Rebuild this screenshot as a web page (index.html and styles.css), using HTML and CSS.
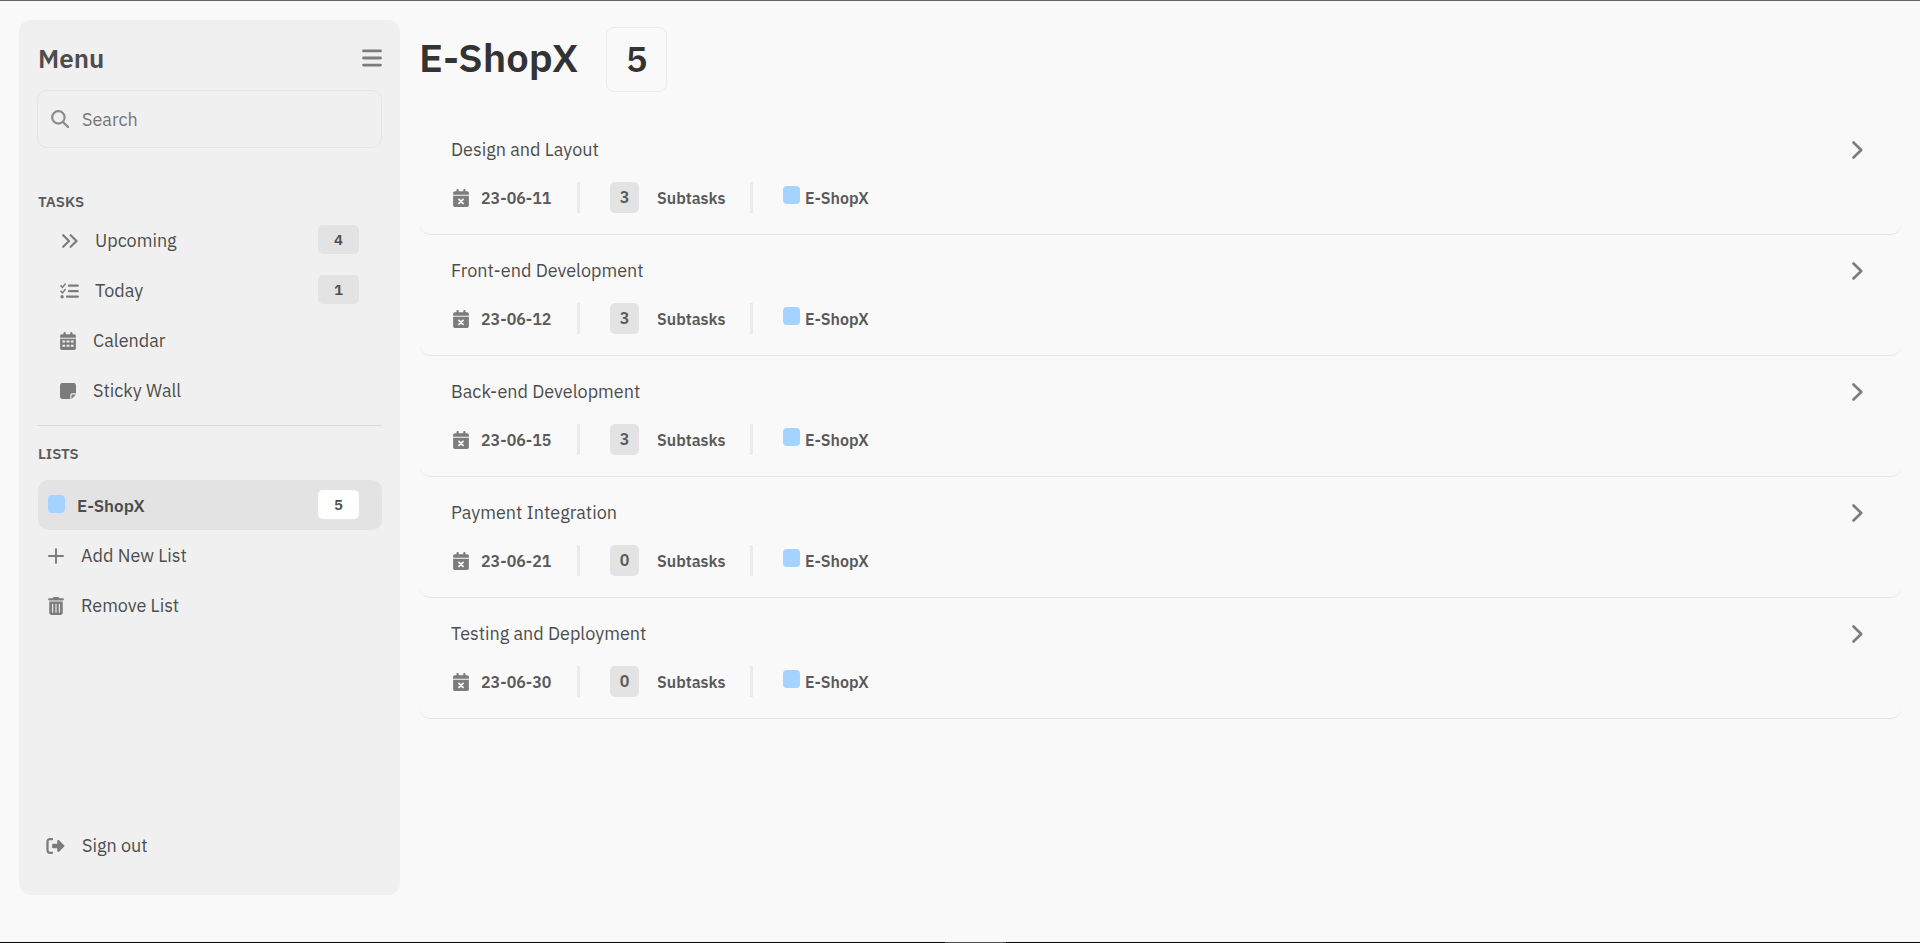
FILE: index.html
```html
<!DOCTYPE html>
<html lang="en">
<head>
<meta charset="utf-8">
<title>E-ShopX</title>
<link rel="stylesheet" href="styles.css">
</head>
<body>
<svg class="sprite" aria-hidden="true">
  <symbol id="i-bars" viewBox="0 0 20 18"><path d="M1.5 1.9h17M1.5 9h17M1.5 16.1h17" fill="none" stroke="currentColor" stroke-width="2.8" stroke-linecap="round"/></symbol>
  <symbol id="i-search" viewBox="0 0 18 18"><circle cx="7.4" cy="7.4" r="6.2" fill="none" stroke="currentColor" stroke-width="2.2"/><path d="M12 12l5 5" stroke="currentColor" stroke-width="2.4" stroke-linecap="round"/></symbol>
  <symbol id="i-angles" viewBox="0 0 16 14"><path d="M1.2 1.2L7 7l-5.800 5.800M8.700 1.200L14.500 7l-5.800 5.800" fill="none" stroke="currentColor" stroke-width="2.2" stroke-linecap="round" stroke-linejoin="round"/></symbol>
  <symbol id="i-check" viewBox="0 0 19 16"><path d="M1 2.900l1.500 1.500L5.200 1M1 8.400l1.500 1.500L5.200 6.500" fill="none" stroke="currentColor" stroke-width="1.500" stroke-linecap="round" stroke-linejoin="round"/><circle cx="2.100" cy="13.700" r="1.700" fill="currentColor"/><path d="M9 2.700h8.800M9 8.200h8.800M7 13.700h10.800" stroke="currentColor" stroke-width="2.200" stroke-linecap="round"/></symbol>
  <symbol id="i-calendar" viewBox="0 0 448 512"><path fill="currentColor" fill-rule="evenodd" d="M96 32c0-18 14-32 32-32s32 14 32 32v32h128V32c0-18 14-32 32-32s32 14 32 32v32h48c26.500 0 48 21.500 48 48v48H0v-48c0-26.500 21.500-48 48-48h48zM0 192h448v272c0 26.500-21.500 48-48 48H48c-26.500 0-48-21.500-48-48zM64 240v56h80v-56zM184 240v56h80v-56zM304 240v56h80v-56zM64 360v56h80v-56zM184 360v56h80v-56zM304 360v56h80v-56z"/></symbol>
  <symbol id="i-note" viewBox="0 0 448 448"><path fill="currentColor" d="M64 0C28.700 0 0 28.700 0 64v320c0 35.300 28.700 64 64 64h224V336c0-26.500 21.500-48 48-48h112V64c0-35.300-28.700-64-64-64zM448 320H336c-8.800 0-16 7.200-16 16v112z"/></symbol>
  <symbol id="i-plus" viewBox="0 0 16 16"><path d="M8 1v14M1 8h14" stroke="currentColor" stroke-width="1.900" stroke-linecap="round"/></symbol>
  <symbol id="i-trash" viewBox="0 0 448 512"><path fill="currentColor" fill-rule="evenodd" d="M135 18c5-11 17-18 29-18h120c12 0 23 7 29 18l7 14h96c18 0 32 14 32 32s-14 32-32 32H32C14 96 0 82 0 64s14-32 32-32h96zM32 128h384v320c0 35-29 64-64 64H96c-35 0-64-29-64-64zM128 192c-9 0-16 7-16 16v224c0 9 7 16 16 16s16-7 16-16V208c0-9-7-16-16-16zM224 192c-9 0-16 7-16 16v224c0 9 7 16 16 16s16-7 16-16V208c0-9-7-16-16-16zM320 192c-9 0-16 7-16 16v224c0 9 7 16 16 16s16-7 16-16V208c0-9-7-16-16-16z"/></symbol>
  <symbol id="i-out" viewBox="0 0 512 448"><path fill="currentColor" d="M502 241L362 381c-7 7-15 10-24 10-19 0-34-15-34-34v-69H192c-18 0-32-14-32-32v-64c0-18 14-32 32-32h112V91c0-19 15-34 34-34 9 0 17 4 24 10l140 140c10 10 10 24 0 34zM160 64H96c-18 0-32 14-32 32v256c0 18 14 32 32 32h64c18 0 32 14 32 32s-14 32-32 32H96c-53 0-96-43-96-96V96C0 43 43 0 96 0h64c18 0 32 14 32 32s-14 32-32 32z"/></symbol>
  <symbol id="i-due" viewBox="0 0 448 512"><path fill="currentColor" fill-rule="evenodd" d="M96 32c0-18 14-32 32-32s32 14 32 32v32h128V32c0-18 14-32 32-32s32 14 32 32v32h48c26.500 0 48 21.500 48 48v48H0v-48c0-26.500 21.500-48 48-48h48zM0 192h448v272c0 26.500-21.500 48-48 48H48c-26.500 0-48-21.500-48-48z"/><path d="M166 294l116 116M282 294L166 410" stroke="#f9f9f9" stroke-width="50" stroke-linecap="round"/></symbol>
  <symbol id="i-next" viewBox="0 0 11 18"><path d="M1.500 1.500L9.200 9l-7.700 7.500" fill="none" stroke="currentColor" stroke-width="2.600" stroke-linecap="round" stroke-linejoin="round"/></symbol>
</svg>
<div class="app">
  <aside class="sidebar">
    <header class="menu-head">
      <h2>Menu</h2>
      <button class="icon-button" aria-label="Toggle menu"><svg width="20" height="18"><use href="#i-bars"/></svg></button>
    </header>
    <label class="search">
      <svg width="18" height="18"><use href="#i-search"/></svg>
      <input type="text" placeholder="Search" aria-label="Search">
    </label>
    <nav class="tasks-nav">
      <h3>TASKS</h3>
      <a class="item" href="#"><span class="icon wide"><svg width="20" height="14"><use href="#i-angles"/></svg></span>Upcoming<span class="badge">4</span></a>
      <a class="item" href="#"><span class="icon wide"><svg width="19" height="16"><use href="#i-check"/></svg></span>Today<span class="badge">1</span></a>
      <a class="item" href="#"><span class="icon"><svg width="16" height="18"><use href="#i-calendar"/></svg></span>Calendar</a>
      <a class="item" href="#"><span class="icon"><svg width="16" height="16"><use href="#i-note"/></svg></span>Sticky Wall</a>
    </nav>
    <section class="lists-nav">
      <h3>LISTS</h3>
      <a class="item selected" href="#"><span class="swatch"></span>E-ShopX<span class="badge">5</span></a>
      <button class="item"><span class="icon"><svg width="16" height="16"><use href="#i-plus"/></svg></span>Add New List</button>
      <button class="item"><span class="icon"><svg width="16" height="18"><use href="#i-trash"/></svg></span>Remove List</button>
    </section>
    <button class="item sign-out"><span class="icon"><svg width="19" height="16"><use href="#i-out"/></svg></span>Sign out</button>
  </aside>
  <main class="content">
    <header class="title">
      <h1>E-ShopX</h1>
      <span class="total">5</span>
    </header>
    <ul class="tasks">
      <li class="task">
        <div class="task-head"><span>Design and Layout</span><button class="icon-button" aria-label="Open Design and Layout"><svg width="11" height="18"><use href="#i-next"/></svg></button></div>
        <div class="meta"><span class="date"><svg width="16" height="18"><use href="#i-due"/></svg>23-06-11</span><span class="subtasks"><span class="count">3</span>Subtasks</span><span class="list"><span class="swatch"></span>E-ShopX</span></div>
      </li>
      <li class="task">
        <div class="task-head"><span>Front-end Development</span><button class="icon-button" aria-label="Open Front-end Development"><svg width="11" height="18"><use href="#i-next"/></svg></button></div>
        <div class="meta"><span class="date"><svg width="16" height="18"><use href="#i-due"/></svg>23-06-12</span><span class="subtasks"><span class="count">3</span>Subtasks</span><span class="list"><span class="swatch"></span>E-ShopX</span></div>
      </li>
      <li class="task">
        <div class="task-head"><span>Back-end Development</span><button class="icon-button" aria-label="Open Back-end Development"><svg width="11" height="18"><use href="#i-next"/></svg></button></div>
        <div class="meta"><span class="date"><svg width="16" height="18"><use href="#i-due"/></svg>23-06-15</span><span class="subtasks"><span class="count">3</span>Subtasks</span><span class="list"><span class="swatch"></span>E-ShopX</span></div>
      </li>
      <li class="task">
        <div class="task-head"><span>Payment Integration</span><button class="icon-button" aria-label="Open Payment Integration"><svg width="11" height="18"><use href="#i-next"/></svg></button></div>
        <div class="meta"><span class="date"><svg width="16" height="18"><use href="#i-due"/></svg>23-06-21</span><span class="subtasks"><span class="count">0</span>Subtasks</span><span class="list"><span class="swatch"></span>E-ShopX</span></div>
      </li>
      <li class="task">
        <div class="task-head"><span>Testing and Deployment</span><button class="icon-button" aria-label="Open Testing and Deployment"><svg width="11" height="18"><use href="#i-next"/></svg></button></div>
        <div class="meta"><span class="date"><svg width="16" height="18"><use href="#i-due"/></svg>23-06-30</span><span class="subtasks"><span class="count">0</span>Subtasks</span><span class="list"><span class="swatch"></span>E-ShopX</span></div>
      </li>
    </ul>
  </main>
</div>
<div class="handle"></div>
</body>
</html>
```
FILE: styles.css
```css
* { box-sizing: border-box; }

body {
  margin: 0;
  min-height: 100vh;
  display: flex;
  flex-direction: column;
  background: #f9f9f9;
  border-top: 1px solid #666;
  color: #4d4d4d;
  font-family: "IBM Plex Sans", Roboto, "Liberation Sans", sans-serif;
  font-size: 18px;
  line-height: 24px;
}

h1, h2, h3, ul { margin: 0; padding: 0; }
h1, h2, h3 { font-weight: 600; }
svg { display: block; flex: none; color: #7c7c7c; }
.sprite { position: absolute; width: 0; height: 0; }

button {
  border: 0;
  padding: 0;
  background: none;
  color: inherit;
  font: inherit;
  cursor: pointer;
}

.app {
  flex: 1;
  display: flex;
  gap: 19px;
  padding: 19px 19px 47px;
}

.sidebar {
  flex: none;
  width: 381px;
  display: flex;
  flex-direction: column;
  padding: 20px 18px 24px;
  border-radius: 12px;
  background: #f0f0f0;
}

.menu-head {
  display: flex;
  align-items: center;
  justify-content: space-between;
  height: 36px;
  margin-bottom: 14px;
  padding-left: 1px;
}

.menu-head h2 { font-size: 26px; line-height: 36px; }

.search {
  display: flex;
  align-items: center;
  gap: 13px;
  height: 58px;
  padding: 0 13px;
  border: 1px solid #e5e5e5;
  border-radius: 10px;
}

.search svg { color: #8c8c8c; }

.search input {
  flex: 1;
  min-width: 0;
  padding: 2px 0 0;
  border: 0;
  outline: 0;
  background: none;
  color: inherit;
  font: inherit;
}

.search input::placeholder { color: #757575; opacity: 1; }

.tasks-nav {
  margin-top: 42px;
  padding-bottom: 9px;
  border-bottom: 1px solid #d9d9d9;
}

h3 { padding-left: 1px; color: #5a5a5a; font-size: 15px; line-height: 24px; }
.tasks-nav h3 { margin-bottom: 2px; }

.item {
  display: flex;
  align-items: center;
  width: 100%;
  height: 50px;
  padding: 0 23px 0 22px;
  border-radius: 10px;
  color: #4d4d4d;
  text-align: left;
  text-decoration: none;
}

.tasks-nav .item { padding-left: 23px; }
.icon { display: flex; flex: none; width: 33px; }
.icon.wide { width: 35px; }

.badge {
  width: 41px;
  margin-left: auto;
  margin-bottom: 4px;
  border-radius: 5px;
  background: #e3e3e3;
  font-size: 15px;
  font-weight: 600;
  line-height: 29px;
  text-align: center;
}

.lists-nav { padding: 16px 0 0 1px; }
.lists-nav h3 { padding-left: 0; margin-bottom: 14px; }
.lists-nav .item { padding-top: 2px; padding-left: 10px; }
.lists-nav .selected { gap: 12px; background: #e3e3e3; font-size: 17px; font-weight: 600; }
.lists-nav .selected .badge { background: #fff; font-size: 15px; }

.swatch {
  flex: none;
  width: 17px;
  height: 18px;
  margin-bottom: 5px;
  border-radius: 4px;
  background: #a5d3ff;
}

.sign-out { margin-top: auto; padding-left: 9px; }
.sign-out .icon { width: 36px; }

.content { flex: 1; min-width: 0; padding-top: 7px; }

.title {
  display: flex;
  align-items: flex-start;
  gap: 28px;
}

h1 { color: #333; font-size: 40px; line-height: 60px; }

.total {
  width: 61px;
  height: 65px;
  border: 1px solid #ebebeb;
  border-radius: 8px;
  color: #333;
  font-size: 36px;
  font-weight: 600;
  line-height: 61px;
  text-align: center;
}

.tasks { margin-top: 22px; padding-left: 1px; list-style: none; }

.task {
  height: 121px;
  padding: 24px 38px 20px 31px;
  border-bottom: 1px solid #e5e5e5;
  border-radius: 10px;
}

.task-head {
  display: flex;
  align-items: center;
  justify-content: space-between;
  margin-bottom: 20px;
}

.meta {
  display: flex;
  align-items: center;
  height: 31px;
  color: #5a5a5a;
  font-size: 16px;
  font-weight: 600;
}

.meta > span { display: flex; align-items: center; height: 31px; }
.date { width: 129px; gap: 12px; padding-left: 2px; border-right: 3px solid #ebebeb; }
.subtasks { width: 173px; gap: 18px; padding-left: 30px; border-right: 3px solid #ebebeb; }
.list { gap: 5px; padding-left: 30px; }

.count {
  width: 29px;
  border-radius: 5px;
  background: #e3e3e3;
  line-height: 31px;
  text-align: center;
}

.handle {
  height: 1px;
  padding-left: 30px;
  background: linear-gradient(#4b4a55, #4b4a55) center / 61px 1px no-repeat content-box, #05060f;
}
```
